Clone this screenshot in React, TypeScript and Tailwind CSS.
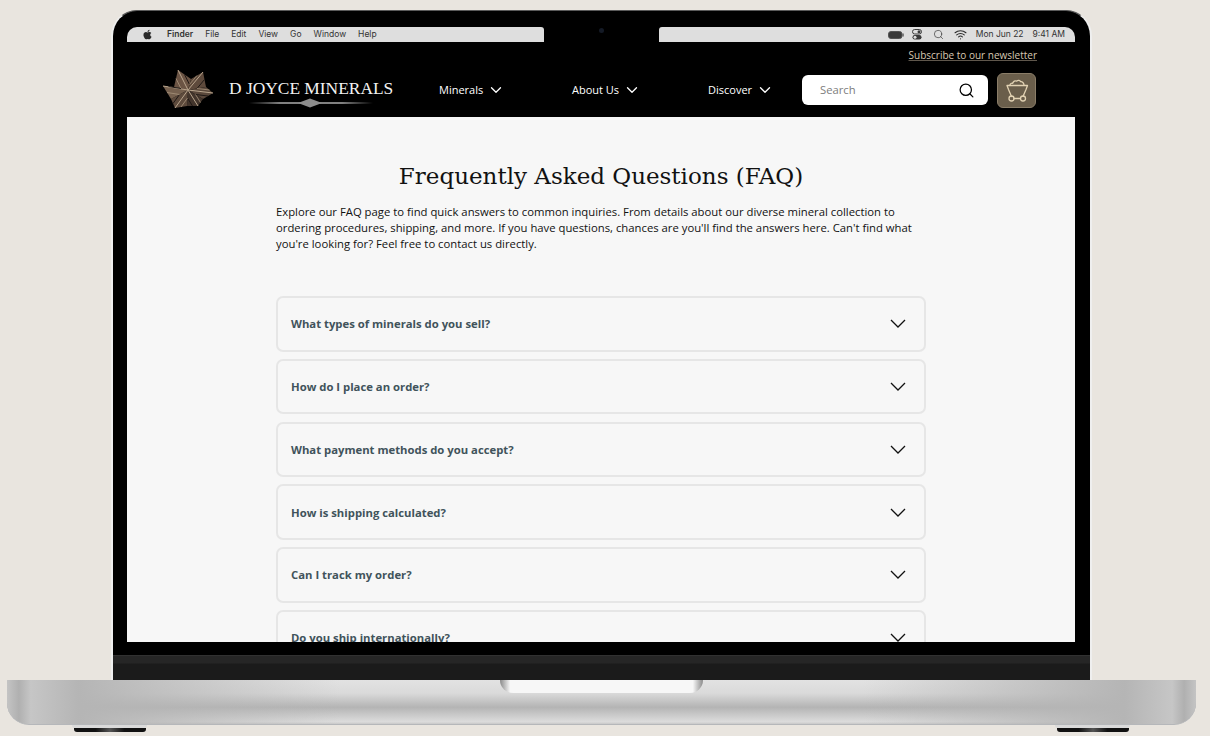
import { FaApple } from "react-icons/fa";
import { ChevronDown, Search, Wifi } from "lucide-react";

const menus = ["File", "Edit", "View", "Go", "Window", "Help"];

const navItems = [
  { label: "Minerals", width: "w-[133px]" },
  { label: "About Us", width: "w-[136px]" },
  { label: "Discover", width: "w-[94px]" },
];

const questions = [
  "What types of minerals do you sell?",
  "How do I place an order?",
  "What payment methods do you accept?",
  "How is shipping calculated?",
  "Can I track my order?",
  "Do you ship internationally?",
];

// star arms: tip, then the two valleys either side of it
const arms = [
  { tip: [17, 2], a: [13, 19], b: [30, 11], fill: "#6b5444" },
  { tip: [42, 4], a: [30, 11], b: [45, 19], fill: "#5e4a3c" },
  { tip: [52, 25], a: [45, 19], b: [42, 31], fill: "#5a483b" },
  { tip: [37, 38], a: [42, 31], b: [26, 38], fill: "#43352c" },
  { tip: [14, 40], a: [26, 38], b: [10, 31], fill: "#5d4a3c" },
  { tip: [2, 18], a: [10, 31], b: [13, 19], fill: "#75604e" },
];

function StarLogo() {
  return (
    <svg width="54" height="44" viewBox="0 0 54 44" className="shrink-0">
      {arms.map((arm) => (
        <g key={arm.tip.join()}>
          <polygon
            points={`27,22 ${arm.a.join(",")} ${arm.tip.join(",")} ${arm.b.join(",")}`}
            fill={arm.fill}
          />
          <line x1="27" y1="22" x2={arm.tip[0]} y2={arm.tip[1]} stroke="#b9a58d" strokeWidth="1" />
          <line
            x1={(arm.a[0] + 27) / 2}
            y1={(arm.a[1] + 22) / 2}
            x2={(arm.tip[0] + arm.a[0]) / 2}
            y2={(arm.tip[1] + arm.a[1]) / 2}
            stroke="#a8947c"
            strokeWidth="0.800"
          />
          <line
            x1={(arm.b[0] + 27) / 2}
            y1={(arm.b[1] + 22) / 2}
            x2={(arm.tip[0] + arm.b[0]) / 2}
            y2={(arm.tip[1] + arm.b[1]) / 2}
            stroke="#1f1815"
            strokeWidth="1"
          />
        </g>
      ))}
    </svg>
  );
}

function LogoRule() {
  return (
    <svg width="124" height="10" viewBox="0 0 124 10" className="block">
      <defs>
        <linearGradient id="rule" x1="0" y1="0" x2="1" y2="0">
          <stop offset="0" stopColor="#fff" stopOpacity="0" />
          <stop offset="0.25" stopColor="#fff" />
          <stop offset="0.75" stopColor="#fff" />
          <stop offset="1" stopColor="#fff" stopOpacity="0" />
        </linearGradient>
      </defs>
      <rect x="0" y="4.500" width="124" height="1" fill="url(#rule)" />
      <polygon points="49,5 61,0.500 73,5 61,9.500" fill="#8d8d8d" />
    </svg>
  );
}

function CartIcon() {
  return (
    <svg width="26" height="26" viewBox="0 0 26 26" fill="none" stroke="#e2d2b3" strokeWidth="1.300" strokeLinecap="round" strokeLinejoin="round">
      <path d="M3 8.500h20.500l-1.500 4-3 7M3 8.500l1.500 4 3 7" />
      <path d="M6 8c.3-1.500 1.500-2 2.700-1.700C9.400 4.300 11 3.300 12.700 4.100c1.300-1.300 3.300-1 3.900.600 1.700-.3 3.200 1.200 3.400 3.300" />
      <circle cx="7.500" cy="21.500" r="2.500" />
      <circle cx="19" cy="21.500" r="2.500" />
      <path d="M10 21.500h6.500" />
    </svg>
  );
}

function MenuBar() {
  return (
    <div className="flex h-[15px] font-['Inter',sans-serif] text-[8.500px] leading-[15px] text-[#333]">
      <div className="flex w-[417px] items-center gap-3 rounded-tl-[10px] rounded-tr-[3px] bg-[#dedede] pl-[15px]">
        <FaApple className="mr-[2px] text-[11px] text-[#2a2a2a]" />
        <span className="font-semibold">Finder</span>
        {menus.map((m) => (
          <span key={m}>{m}</span>
        ))}
      </div>
      <div className="flex w-[115px] items-start justify-center bg-black pt-[1px]">
        <div className="h-[5px] w-[5px] rounded-full bg-[#141a26]" />
      </div>
      <div className="flex w-[416px] items-center justify-end rounded-tl-[3px] rounded-tr-[10px] bg-[#dedede] pr-[10px]">
        <svg width="16" height="8" viewBox="0 0 16 8" className="mr-[8px]">
          <rect x="0.500" y="0.500" width="13.500" height="7" rx="2.500" fill="#3a3a3a" stroke="#555" />
          <rect x="14.500" y="2.500" width="1.200" height="3" fill="#555" />
        </svg>
        <svg width="10" height="11" viewBox="0 0 10 11" className="mr-[11px]">
          <rect x="0.500" y="0.500" width="9" height="4.500" rx="2.200" fill="none" stroke="#3a3a3a" />
          <circle cx="7" cy="2.750" r="1.500" fill="#3a3a3a" />
          <rect x="0.500" y="6" width="9" height="4.500" rx="2.200" fill="#3a3a3a" />
          <circle cx="3" cy="8.250" r="1.500" fill="#dedede" />
        </svg>
        <Search size={11} strokeWidth={1.500} className="mr-[10px] text-[#3a3a3a]" />
        <Wifi size={13} strokeWidth={2} className="mr-[9px] text-[#2a2a2a]" />
        <span>Mon Jun 22</span>
        <span className="ml-[9px]">9:41 AM</span>
      </div>
    </div>
  );
}

function SiteHeader() {
  return (
    <header className="h-[75px] bg-black font-['Open_Sans',sans-serif]">
      <div className="flex h-[26px] items-center justify-end pr-[38px] pt-[1px]">
        <span className="text-[10px] text-[#d9c9b2] underline decoration-[#5f574c] underline-offset-1">
          Subscribe to our newsletter
        </span>
      </div>
      <div className="flex h-[44px] items-center pl-[34px]">
        <div className="flex w-[278px] items-center gap-[14px]">
          <StarLogo />
          <div className="flex w-[170px] flex-col items-start pt-[5px]">
            <span className="whitespace-nowrap font-['Liberation_Serif',serif] text-[17.400px] leading-[20px] text-[#f2f2f2]">
              D JOYCE MINERALS
            </span>
            <div className="ml-[20px]">
              <LogoRule />
            </div>
          </div>
        </div>
        {navItems.map((item) => (
          <div key={item.label} className={`flex items-center gap-[4px] ${item.width}`}>
            <span className="pt-[1px] text-[11px] text-white">{item.label}</span>
            <ChevronDown size={18} strokeWidth={1.750} className="text-white" />
          </div>
        ))}
        <div className="flex h-[30px] w-[186px] items-center justify-between rounded-[6px] bg-white pl-[18px] pr-[13px]">
          <span className="pt-[1px] text-[11.250px] text-[#7d7d7d]">Search</span>
          <Search size={17} strokeWidth={1.750} className="text-black" />
        </div>
        <div className="ml-[9px] flex h-[35px] w-[39px] items-center justify-center rounded-[6px] border border-[#8a7d68] bg-[#6a5e4b]">
          <CartIcon />
        </div>
      </div>
    </header>
  );
}

function FaqSection() {
  return (
    <main className="h-[525px] overflow-hidden bg-[#f7f7f7] pt-[42px] font-['Open_Sans',sans-serif]">
      <div className="mx-auto w-[650px]">
        <h1 className="text-center font-['DejaVu_Serif',serif] text-[23px] leading-[34px] text-[#111]">
          Frequently Asked Questions (FAQ)
        </h1>
        <p className="mt-[11px] text-[11.300px] leading-[16px] text-[#111]">
          Explore our FAQ page to find quick answers to common inquiries. From details about our diverse mineral collection to ordering procedures, shipping, and more. If you have questions, chances are you'll find the answers here. Can't find what you're looking for? Feel free to contact us directly.
        </p>
        <div className="mt-[44px] flex flex-col gap-[7.250px]">
          {questions.map((q) => (
            <div
              key={q}
              className="flex h-[55.500px] shrink-0 items-center justify-between rounded-[7px] border-2 border-[#e6e6e6] pl-[13px] pr-[18px]"
            >
              <span className="pt-[2px] text-[11.300px] font-bold text-[#41535b]">{q}</span>
              <svg width="16" height="9" viewBox="0 0 16 9" fill="none" stroke="#111" strokeWidth="1.300">
                <path d="M1 1l7 7 7-7" />
              </svg>
            </div>
          ))}
        </div>
      </div>
    </main>
  );
}

function Foot() {
  return (
    <div className="flex w-[75px] flex-col items-center">
      <div className="h-[3px] w-full rounded-b-[3px] bg-[#dadada]" />
      <div className="h-[4px] w-[72px] rounded-b-[3px] bg-[linear-gradient(90deg,#111_0,#111_30%,#555_50%,#111_70%,#111_100%)]" />
    </div>
  );
}

export default function App() {
  return (
    <div className="flex h-[736px] w-[1210px] flex-col overflow-hidden bg-[#e9e5df] pt-[10px]">
      <div className="ml-[111px] h-[670px] w-[981px] shrink-0 rounded-t-[26px] border-x-2 border-t border-x-[#efefef] border-t-[#5a5a5a] bg-black">
        <div className="pl-[14px] pr-[15px] pt-[16px]">
          <MenuBar />
          <SiteHeader />
          <FaqSection />
        </div>
        <div className="mt-[13px] h-[25px] bg-[linear-gradient(180deg,#3c3c3c_0,#262626_1px,#262626_8px,#1b1b1b_9px,#1b1b1b_100%)]" />
      </div>
      <div className="ml-[7px] flex h-[45px] w-[1189px] shrink-0 justify-center rounded-b-[22px] border-b border-[#b5b7ba] bg-[linear-gradient(90deg,#c4c4c4_0,#b0b0b0_1%,#c6c6c6_2%,#b5b5b5_6%,rgba(190,190,190,0)_28%,rgba(190,190,190,0)_72%,#b5b5b5_94%,#c6c6c6_98%,#b0b0b0_99%,#c4c4c4_100%),linear-gradient(180deg,#e2e2e2_0,#dadada_30%,#b4b4b4_62%,#c8c8c8_78%,#dcdcdc_95%,#c8c8c8_100%)]">
        <div className="h-[13px] w-[203px] rounded-b-[13px] bg-[linear-gradient(90deg,#8a8a8a_0,#f7f7f7_5%,#f7f7f7_95%,#8a8a8a_100%)]" />
      </div>
      <div className="flex h-[7px] shrink-0 justify-between pl-[72px] pr-[80px]">
        <Foot />
        <Foot />
      </div>
    </div>
  );
}
